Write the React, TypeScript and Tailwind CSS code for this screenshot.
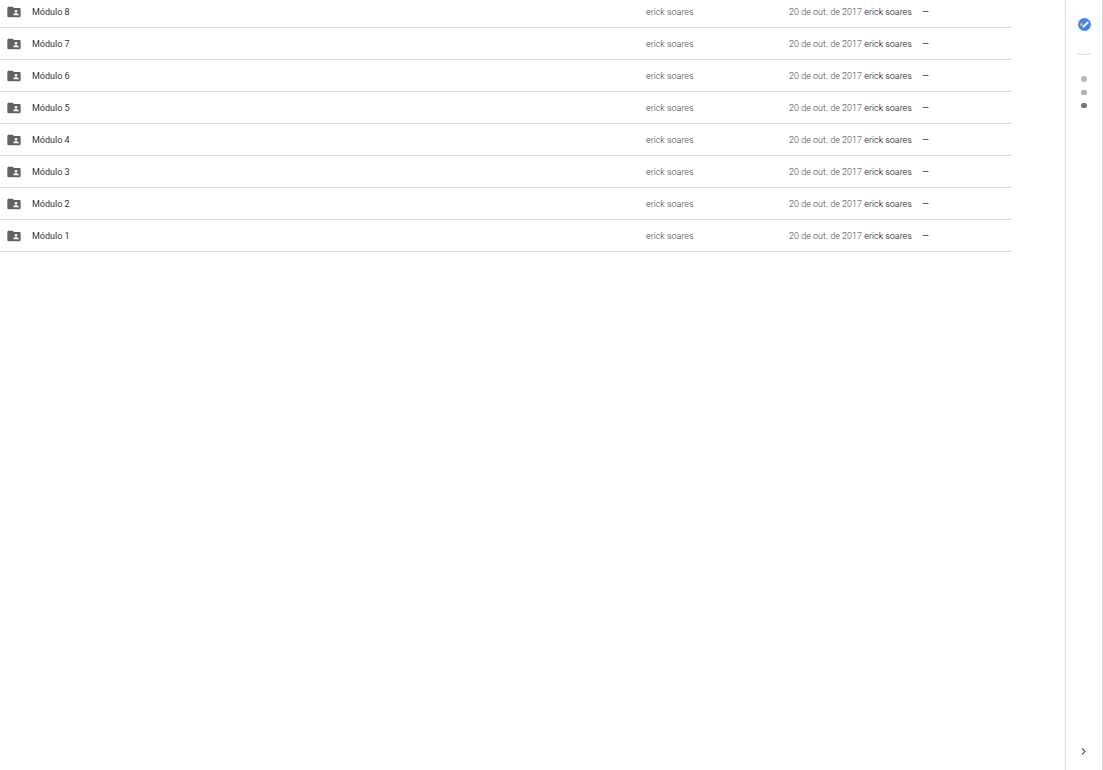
import React from 'react';
import { MdFolderShared } from 'react-icons/md';

const folders = [8, 7, 6, 5, 4, 3, 2, 1].map((n) => ({
  name: `Módulo ${n}`,
  owner: 'erick soares',
  modified: '20 de out. de 2017',
  modifiedBy: 'erick soares',
}));

const cell = 'border-b border-[#dadce0] p-0';

const FileList = () => (
  <table className="w-full table-fixed border-separate border-spacing-0 text-left">
    <colgroup>
      <col />
      <col className="w-[143px]" />
      <col className="w-[133px]" />
      <col className="w-[90px]" />
    </colgroup>
    <tbody>
      {folders.map((folder) => (
        <tr key={folder.name} className="h-8 font-light text-[#444]">
          <td className={cell}>
            <div className="flex items-center gap-2.5 pl-1.5 font-normal text-[#333]">
              <MdFolderShared className="size-4 text-[#5f6368]" />
              {folder.name}
            </div>
          </td>
          <td className={cell}>{folder.owner}</td>
          <td className={`${cell} whitespace-nowrap`}>
            {folder.modified} <span className="text-black">{folder.modifiedBy}</span>
          </td>
          <td className={`${cell} font-normal text-[#333]`}>—</td>
        </tr>
      ))}
    </tbody>
  </table>
);

const SidePanel = () => (
  <aside className="flex w-[38px] shrink-0 flex-col items-center border-x border-[#dadce0]">
    <button type="button" aria-label="Tasks" className="mt-[18px] pl-px">
      <svg viewBox="0 0 13 13" className="size-[13px]">
        <circle cx="6.5" cy="6.5" r="6.5" fill="#4285f4" />
        <path d="M5.4 8.6 L9.6 4.6" fill="none" stroke="#fff" strokeWidth="2" strokeLinecap="round" />
        <circle cx="3.5" cy="6.5" r="1.4" fill="#fbbc04" />
      </svg>
    </button>
    <hr className="mt-[23px] w-3.5 border-[#dadce0]" />
    <div className="mt-[21px] flex flex-col gap-2">
      <span className="size-1.5 rounded-full bg-[#b8b8b8]" />
      <span className="h-[5px] w-1.5 rounded-[2px] bg-[#b0b0b0]" />
      <span className="h-[5px] w-1.5 rounded-[2px] bg-[#777]" />
    </div>
    <button type="button" aria-label="Hide side panel" className="mt-auto mb-[13px]">
      <svg viewBox="0 0 12 12" className="size-3">
        <path d="M4 3.5 L7 6.5 L4 9.5" fill="none" stroke="#5f6368" strokeWidth="1.2" />
      </svg>
    </button>
  </aside>
);

export default function App() {
  return (
    <div className="flex min-h-screen bg-white font-['Roboto',sans-serif] text-[9px] leading-3">
      <main className="mr-[53px] min-w-0 flex-1 -mt-1">
        <FileList />
      </main>
      <SidePanel />
    </div>
  );
}
